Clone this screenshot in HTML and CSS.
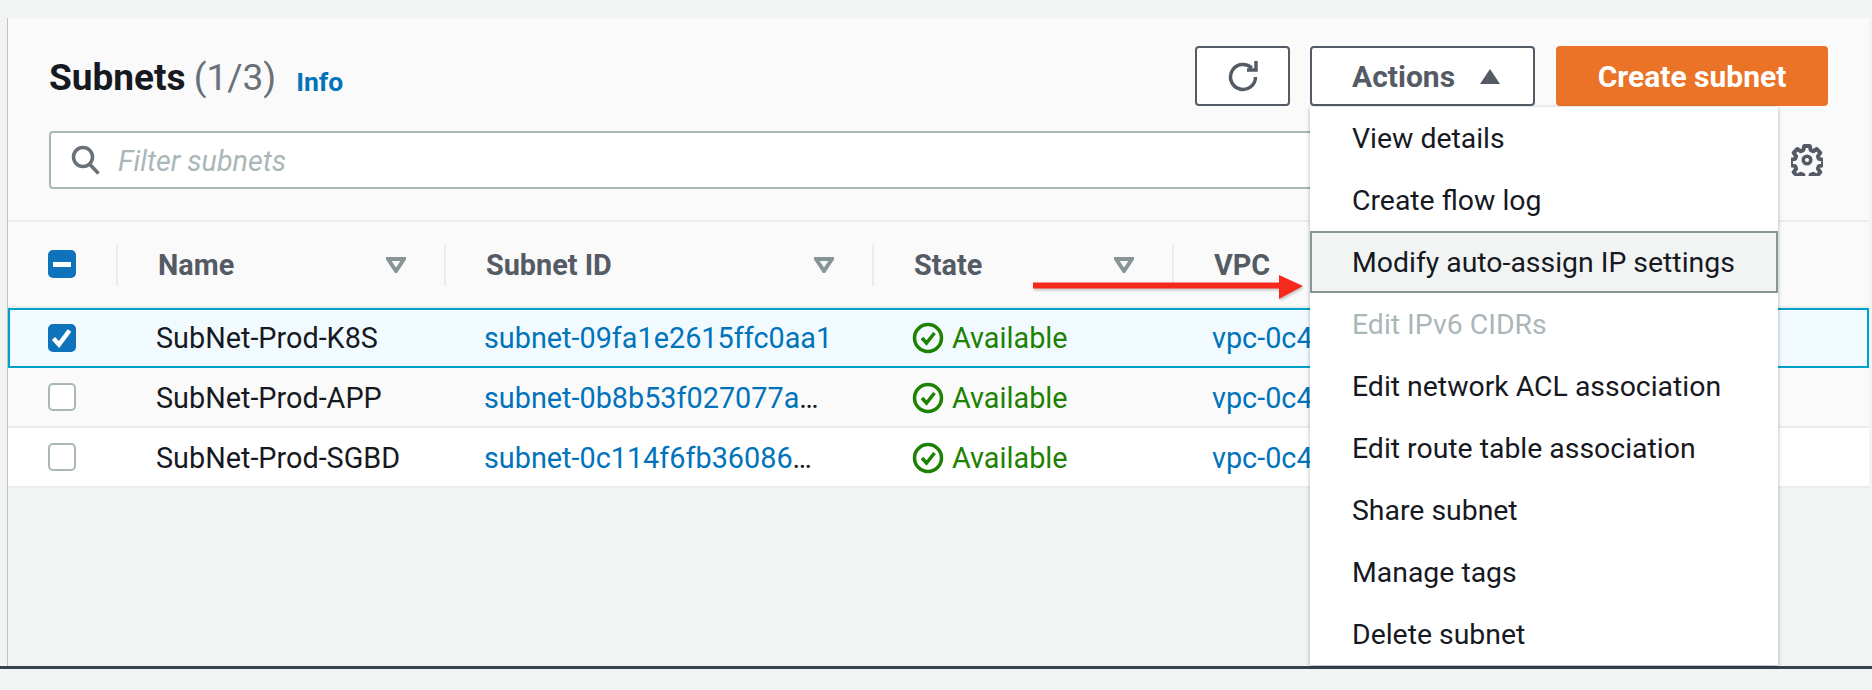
FILE: index.html
```html
<!DOCTYPE html>
<html lang="en">
<head>
    <meta charset="UTF-8">
    <title>Subnets</title>
    <link rel="stylesheet" href="styles.css">
</head>
<body>
    <div class="page">
        <section class="panel">
            <header class="panel-head">
                <div class="head-top">
                    <h2 class="title">Subnets <span class="count">(1/3)</span></h2>
                    <a class="info">Info</a>
                    <div class="head-actions">
                        <button class="btn btn-icon">
                            <svg class="icon-refresh" viewBox="0 0 32 32"><path d="M28.500 17a12.500 12.500 0 1 1-3.700-8.900M29 1v9h-9"/></svg>
                        </button>
                        <div class="dropdown">
                            <button class="btn btn-actions">Actions <span class="caret"></span></button>
                            <ul class="menu">
                                <li>View details</li>
                                <li>Create flow log</li>
                                <li class="active">Modify auto-assign IP settings</li>
                                <li class="disabled">Edit IPv6 CIDRs</li>
                                <li>Edit network ACL association</li>
                                <li>Edit route table association</li>
                                <li>Share subnet</li>
                                <li>Manage tags</li>
                                <li>Delete subnet</li>
                            </ul>
                        </div>
                        <button class="btn btn-primary">Create subnet</button>
                    </div>
                </div>
                <div class="head-filter">
                    <div class="filter">
                        <svg class="icon-search" viewBox="0 0 30 30"><circle cx="12" cy="12" r="9.500"/><path d="M18.500 19l9 9.500"/></svg>
                        <span class="placeholder">Filter subnets</span>
                    </div>
                    <svg class="icon-gear" viewBox="0 0 32 32">
                        <path d="M13.200 2h5.600l.9 4.100 2.500 1.100 3.600-2.200 3.500 3.900-2.400 3.400.9 2.600 4.200.9v5.400l-4.200.9-.9 2.600 2.400 3.400-3.500 3.900-3.600-2.200-2.500 1.100-.9 4.100h-5.600l-.9-4.100-2.500-1.100-3.600 2.200-3.500-3.900 2.400-3.400-.9-2.600-4.200-.9v-5.400l4.200-.9.9-2.600-2.400-3.400 3.500-3.900 3.600 2.200 2.500-1.100z"/>
                        <circle class="gear-hub" cx="16" cy="16" r="3.800"/>
                    </svg>
                </div>
            </header>

            <div class="table">
                <div class="row row-head">
                    <div class="cell cell-check"><span class="check check-on"><span class="dash"></span></span></div>
                    <div class="cell cell-th">Name <svg class="sort" viewBox="0 0 20 16"><path d="M2 2h16L10 14z"/></svg></div>
                    <div class="cell cell-th">Subnet ID <svg class="sort" viewBox="0 0 20 16"><path d="M2 2h16L10 14z"/></svg></div>
                    <div class="cell cell-th">State <svg class="sort" viewBox="0 0 20 16"><path d="M2 2h16L10 14z"/></svg></div>
                    <div class="cell cell-th cell-last">VPC</div>
                </div>
                <div class="row row-selected">
                    <div class="cell cell-check"><span class="check check-on"><svg class="tick" viewBox="0 0 28 28"><path d="M5.500 14.500l5.500 6 10.500-14"/></svg></span></div>
                    <div class="cell">SubNet-Prod-K8S</div>
                    <div class="cell"><a class="link">subnet-09fa1e2615ffc0aa1</a></div>
                    <div class="cell status"><svg class="icon-ok" viewBox="0 0 32 32"><circle cx="16" cy="16" r="13.500"/><path d="M10 16l4.500 5 8-10"/></svg>Available</div>
                    <div class="cell"><a class="link">vpc-0c4</a></div>
                </div>
                <div class="row row-alt row-low">
                    <div class="cell cell-check"><span class="check"></span></div>
                    <div class="cell">SubNet-Prod-APP</div>
                    <div class="cell"><a class="link">subnet-0b8b53f027077a</a>…</div>
                    <div class="cell status"><svg class="icon-ok" viewBox="0 0 32 32"><circle cx="16" cy="16" r="13.500"/><path d="M10 16l4.500 5 8-10"/></svg>Available</div>
                    <div class="cell"><a class="link">vpc-0c4</a></div>
                </div>
                <div class="row row-low">
                    <div class="cell cell-check"><span class="check"></span></div>
                    <div class="cell">SubNet-Prod-SGBD</div>
                    <div class="cell"><a class="link">subnet-0c114f6fb36086</a>…</div>
                    <div class="cell status"><svg class="icon-ok" viewBox="0 0 32 32"><circle cx="16" cy="16" r="13.500"/><path d="M10 16l4.500 5 8-10"/></svg>Available</div>
                    <div class="cell"><a class="link">vpc-0c4</a></div>
                </div>
            </div>
            <div class="panel-rest"></div>
        </section>
        <div class="base-line"></div>

        <!-- red annotation arrow drawn over the screenshot -->
        <svg class="arrow" viewBox="0 0 276 30">
            <path d="M2 9.500h246V2l24 11-24 13v-10.500H2z"/>
        </svg>
    </div>
</body>
</html>
```

FILE: styles.css
```css
* {
    box-sizing: border-box;
}
body {
    margin: 0;
    background: #f2f3f3;
    font-family: "Roboto", "Liberation Sans", sans-serif;
    font-size: 28.800px;
    color: #16191f;
}
.page {
    position: relative;
    height: 690px;
    padding-top: 18px;
    overflow: hidden;
}
.panel {
    height: 648px;
    margin: 0 3px 0 7px;
    border-left: 1px solid #bcc4c4;
    display: flex;
    flex-direction: column;
}
.base-line {
    height: 3px;
    background: #37424f;
}

/* header */
.panel-head {
    height: 204px;
    padding: 28px 41px 0 41px;
    background: #fafafa;
    border-bottom: 2px solid #eaeded;
}
.head-top {
    display: flex;
    align-items: center;
    height: 60px;
}
.title {
    margin: 4px 0 0;
    font-size: 37px;
    font-weight: 700;
    line-height: 60px;
}
.count {
    margin-left: -1px;
    font-weight: 400;
    color: #687078;
}
.info {
    margin: 10px 0 0 20px;
    font-size: 26.500px;
    font-weight: 700;
    color: #0073bb;
}
.head-actions {
    display: flex;
    align-items: center;
    margin-left: auto;
}
.btn {
    height: 60px;
    border: 2px solid #545b64;
    border-radius: 4px;
    background: #fff;
    font-family: inherit;
    font-size: 30px;
    font-weight: 700;
    color: #545b64;
}
.btn-icon {
    width: 95px;
    display: flex;
    align-items: center;
    justify-content: center;
}
.icon-refresh {
    width: 32px;
    height: 32px;
    fill: none;
    stroke: #545b64;
    stroke-width: 3.500;
}
.dropdown {
    position: relative;
    margin-left: 20px;
}
.btn-actions {
    width: 225px;
    display: flex;
    align-items: center;
    padding-left: 40px;
}
.caret {
    margin-left: 25px;
    border-left: 10px solid transparent;
    border-right: 10px solid transparent;
    border-bottom: 15px solid #545b64;
}
.btn-primary {
    width: 272px;
    margin-left: 21px;
    background: #ea7327;
    border-color: #ea7327;
    color: #fff;
}
.menu {
    position: absolute;
    z-index: 2;
    top: 61px;
    left: 0;
    width: 468px;
    margin: 0;
    padding: 0;
    list-style: none;
    font-size: 28.400px;
    background: #fff;
    box-shadow: 0 1px 4px rgba(0, 28, 36, 0.35);
}
.menu li {
    height: 62px;
    display: flex;
    align-items: center;
    padding-left: 42px;
}
.menu .active {
    background: #f2f3f3;
    border: 2px solid #879596;
    padding-left: 40px;
}
.menu .disabled {
    color: #aab7b8;
}

.head-filter {
    display: flex;
    align-items: center;
    justify-content: space-between;
    margin-top: 25px;
}
.filter {
    width: 1650px;
    height: 58px;
    display: flex;
    align-items: center;
    padding-left: 20px;
    font-size: 28.700px;
    background: #fff;
    border: 2px solid #aab7b8;
    border-radius: 4px;
}
.icon-search {
    width: 30px;
    height: 30px;
    fill: none;
    stroke: #687078;
    stroke-width: 3.500;
}
.placeholder {
    margin: 2px 0 0 17px;
    font-style: italic;
    color: #aab7b8;
}
.icon-gear {
    width: 32px;
    height: 32px;
    margin-right: 5px;
    fill: none;
    stroke: #545b64;
    stroke-width: 4;
    stroke-linejoin: round;
}
.gear-hub {
    stroke-width: 3.500;
}

/* table */
.row {
    display: grid;
    grid-template-columns: 108px 328px 428px 300px 1fr;
    height: 60px;
    background: #fff;
    border-bottom: 2px solid #eaeded;
}
.row-head {
    height: 86px;
    background: #fafafa;
    font-weight: 700;
    color: #545b64;
}
.row-selected {
    background: #f1faff;
    border-bottom: 0;
    box-shadow: inset 0 0 0 2px #00a1c9;
}
.row-alt {
    background: #fafafa;
}
.cell {
    display: flex;
    align-items: center;
    padding-left: 40px;
    white-space: nowrap;
}
.row-low .cell {
    padding-top: 2px;
}
.row-low .cell-check {
    padding-top: 0;
}
.cell-check {
    padding-left: 40px;
}
.cell-th {
    height: 42px;
    margin-top: 22px;
    padding: 0 38px 1px 40px;
    justify-content: space-between;
    border-left: 2px solid #eaeded;
}
.cell-last {
    justify-content: flex-start;
}
.sort {
    width: 20px;
    height: 16px;
    fill: none;
    stroke: #879596;
    stroke-width: 4;
}
.check {
    width: 28px;
    height: 28px;
    display: flex;
    align-items: center;
    justify-content: center;
    background: #fff;
    border: 2px solid #aab7b8;
    border-radius: 5px;
}
.check-on {
    background: #0f73bb;
    border-color: #0f73bb;
}
.dash {
    width: 18px;
    height: 5px;
    background: #fff;
}
.tick {
    flex: none;
    width: 28px;
    height: 28px;
    fill: none;
    stroke: #fff;
    stroke-width: 4.500;
}
.link {
    color: #0073bb;
}
.status {
    color: #1d8102;
}
.icon-ok {
    width: 32px;
    height: 32px;
    margin-right: 8px;
    fill: none;
    stroke: #1d8102;
    stroke-width: 3.500;
}
.panel-rest {
    flex: 1;
    background: #f2f3f3;
}

.arrow {
    position: absolute;
    left: 1031px;
    top: 273px;
    width: 276px;
    height: 30px;
    fill: #f5291c;
    filter: drop-shadow(1px 2px 1px rgba(0, 0, 0, 0.2));
}
```
